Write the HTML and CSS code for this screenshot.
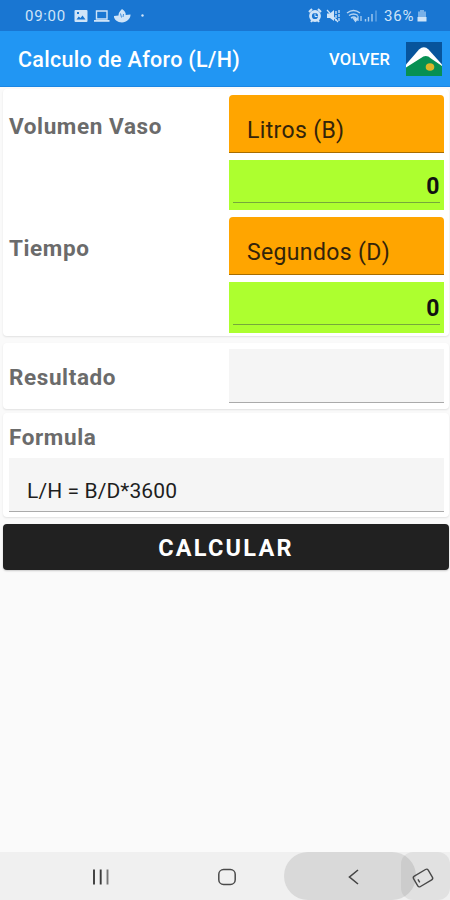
FILE: index.html
```html
<!DOCTYPE html>
<html lang="es">
<head>
    <meta charset="UTF-8">
    <meta name="viewport" content="width=device-width, initial-scale=1.0">
    <title>Calculo de Aforo (L/H)</title>
    <link rel="stylesheet" href="styles.css">
</head>
<body>
    <div class="status-bar">
        <span class="clock">09:00</span>
        <svg class="status-left" width="72" height="16" viewBox="0 0 72 16">
            <path fill-rule="evenodd" d="M1.500 2h11a1 1 0 0 1 1 1v10a1 1 0 0 1-1 1h-11a1 1 0 0 1-1-1V3a1 1 0 0 1 1-1zM2.500 11.500h9L8.500 7.500 6.500 10 4.700 8.500zM3 4v2h2V4z"/>
            <path d="M22.500 3h10.500v8H22.500z" fill="none" stroke="#cfe4f8" stroke-width="1.400"/>
            <path d="M20 12h15.500v1.800H20z"/>
            <path d="M48 1c3 2 4 4 3.700 6l4.800-.5c.3 4-4 8-8.500 8s-8.500-3.500-8-6.500l4.500-.5c0-2.500 1-4 3.500-6.500z"/>
            <path d="M46.500 5.500l1 4M49.500 6l-.5 3" stroke="#1976d2" stroke-width=".8"/>
            <circle cx="68.500" cy="7.500" r="1.200"/>
        </svg>
        <svg class="status-right" width="72" height="16" viewBox="0 0 72 16">
            <path d="M1 4l3-3M13 4l-3-3M3 14l1.500-2M11 14l-1.500-2" stroke="#cfe4f8" stroke-width="2"/>
            <circle cx="7" cy="8" r="4.500" fill="none" stroke="#cfe4f8" stroke-width="2.800"/>
            <path d="M7 5.500V8.500h2.500" fill="none" stroke="#cfe4f8"/>
            <path d="M19 5.500h3l4-3.500v11l-4-3h-3z"/>
            <path d="M19 2l11 12" stroke="#cfe4f8" stroke-width="1.200"/>
            <path d="M28 3v10M31 2v12" stroke="#cfe4f8" stroke-width="1.300" stroke-dasharray="3 1"/>
            <path d="M39 5c4-3 9-3 13 0M41 7.500c3-2 6-2 9 0M43 10c2-1.300 3.500-1.300 5 0" fill="none" stroke="#b5d4f2" stroke-width="1.500"/>
            <path d="M45 10l2.500 3.500 2-3zM50 13V8M53 8v5" stroke="#b5d4f2" stroke-width="1.200"/>
            <path d="M57.500 11v2.500M60.500 9v4.500M64 6v7.500" stroke="#a5cbef" stroke-width="1.400"/>
            <path d="M68 2.500v11" stroke="#6caae6" stroke-width="1.300"/>
        </svg>
        <span class="battery-text">36%</span>
        <svg class="battery" width="10" height="14" viewBox="0 0 10 14">
            <path d="M3 1h4v1.500h2V9H1V2.500h2z" fill="#78b0e8"/>
            <path d="M.5 8h9v4.500H.5z"/>
        </svg>
    </div>

    <header class="app-bar">
        <h1>Calculo de Aforo (L/H)</h1>
        <a class="volver" href="#">VOLVER</a>
        <svg class="logo" width="36" height="34" viewBox="0 0 36 34">
            <rect width="36" height="34" fill="#07549c"/>
            <path d="M0 22.500L13 7.500q5-4.500 9.500 0L36 22.500V34H0z" fill="#fff"/>
            <path d="M0 25.500L15 16q5-4 10 .5L36 24v10H0z" fill="#079052"/>
            <ellipse cx="24" cy="25" rx="4.300" ry="3.800" fill="#dcb52a"/>
        </svg>
    </header>

    <main>
        <section class="card datos">
            <label>Volumen Vaso</label>
            <div class="unidad">Litros (B)</div>
            <div class="valor"><span>0</span></div>
            <label>Tiempo</label>
            <div class="unidad">Segundos (D)</div>
            <div class="valor"><span>0</span></div>
        </section>

        <section class="card resultado">
            <label>Resultado</label>
            <div class="campo"></div>
        </section>

        <section class="card formula">
            <label>Formula</label>
            <div class="campo">L/H = B/D*3600</div>
        </section>

        <button class="calcular">CALCULAR</button>
    </main>

    <nav class="nav-bar">
        <div class="nav-item">
            <svg width="20" height="18" viewBox="0 0 20 18">
                <path d="M3 1.500v15M9.700 1.500v15" stroke="#3c3c3c" stroke-width="1.900"/>
                <path d="M16.500 1.500v15" stroke="#777" stroke-width="1.900"/>
            </svg>
        </div>
        <div class="nav-item">
            <svg width="20" height="18" viewBox="0 0 20 18">
                <rect x="1.800" y="1.500" width="16.400" height="15" rx="4.800" fill="none" stroke="#4a4a4a" stroke-width="1.500"/>
            </svg>
        </div>
        <div class="nav-item atras">
            <svg width="20" height="18" viewBox="0 0 20 18">
                <path d="M15 2L6.500 9l8.500 7" fill="none" stroke="#444" stroke-width="1.600"/>
            </svg>
        </div>
        <div class="rotar">
            <svg width="24" height="22" viewBox="0 0 24 22">
                <g transform="rotate(-31 12 11)" fill="none" stroke="#484848" stroke-width="1.400">
                    <rect x="3.500" y="5" width="17" height="12" rx="2"/>
                    <path d="M7 9.500v3.500"/>
                </g>
            </svg>
        </div>
    </nav>
</body>
</html>
```

FILE: styles.css
```css
* {
    box-sizing: border-box;
}

body {
    margin: 0;
    height: 900px;
    display: flex;
    flex-direction: column;
    font-family: Roboto, sans-serif;
    background-color: #fafafa;
    overflow: hidden;
}

svg {
    display: block;
    flex-shrink: 0;
}

.status-bar {
    display: flex;
    align-items: center;
    height: 31px;
    padding: 1px 23px 0 25px;
    background-color: #1976d2;
    color: #cfe4f8;
    fill: #cfe4f8;
    font-size: 15px;
}

.clock {
    width: 49px;
    letter-spacing: 0.7px;
}

.status-right {
    margin-left: auto;
}

.battery-text {
    width: 33px;
    margin-left: 4px;
    letter-spacing: 0.8px;
}

.app-bar {
    display: flex;
    align-items: center;
    height: 56px;
    padding: 0 8px 0 18px;
    background-color: #2196f3;
    border-bottom: 1px solid #1b86e3;
    color: #fff;
}

.app-bar h1 {
    flex: 1;
    margin: 0;
    padding-top: 2px;
    font-size: 21.5px;
    font-weight: 500;
    letter-spacing: 0.3px;
}

.volver {
    margin-right: 16px;
    padding-top: 2px;
    color: #fff;
    font-size: 16.5px;
    font-weight: 500;
    letter-spacing: 0.2px;
    text-decoration: none;
}

main {
    flex: 1;
    padding: 2px 1px 0 3px;
}

.card {
    background-color: #fff;
    border-radius: 4px;
    padding: 6px;
    box-shadow: 0 1px 2px rgba(0, 0, 0, 0.1);
}

.card label {
    color: #6b6b6b;
    font-size: 22.5px;
    font-weight: 700;
    line-height: 28px;
    letter-spacing: 0.6px;
}

.datos {
    display: grid;
    grid-template-columns: 220px 214.5px;
    grid-template-rows: 58px 50px 58px 51px;
    row-gap: 7px;
    height: 247px;
}

.datos label {
    padding-top: 17px;
}

.unidad {
    padding: 22px 18px 0;
    border-radius: 4px 4px 0 0;
    border-bottom: 1px solid #a86d00;
    background-color: #ffa500;
    color: #33240a;
    font-size: 23px;
    line-height: 28px;
    letter-spacing: 0.35px;
}

.valor {
    grid-column: 2;
    padding: 8px 4px 0;
    background-color: #adff2f;
}

.valor span {
    display: block;
    height: 35px;
    border-bottom: 1px solid #76a83b;
    color: #111;
    font-size: 23px;
    font-weight: 700;
    line-height: 37px;
    text-align: right;
}

.campo {
    height: 54px;
    border-bottom: 1px solid #aaa;
    background-color: #f5f5f5;
    color: #1e1e1e;
}

.resultado {
    display: grid;
    grid-template-columns: 220px 214.5px;
    align-items: center;
    height: 66px;
    margin-top: 7px;
}

.resultado label {
    padding-top: 2px;
}

.formula {
    height: 104px;
    margin-top: 4px;
    padding-top: 9px;
}

.formula label {
    display: block;
    height: 36px;
    line-height: 30px;
}

.formula .campo {
    width: 434.5px;
    padding: 20px 18px 0;
    font-size: 21px;
    line-height: 26px;
    letter-spacing: 0.1px;
}

.calcular {
    display: block;
    width: 446px;
    height: 46px;
    margin-top: 7px;
    padding: 2px 0 0;
    border: none;
    border-radius: 4px;
    background-color: #212121;
    color: #fff;
    font-family: inherit;
    font-size: 23.5px;
    font-weight: 700;
    letter-spacing: 2.2px;
    box-shadow: 0 1px 2px rgba(0, 0, 0, 0.2);
}

.nav-bar {
    position: relative;
    display: flex;
    align-items: center;
    height: 48px;
    padding: 2px 0 0 38px;
    background-color: #f0f0f0;
}

.nav-item {
    position: relative;
    display: flex;
    justify-content: center;
    width: 126px;
}

/* zona pulsada detras del boton atras */
.atras::before {
    content: "";
    position: absolute;
    top: -16px;
    left: -6px;
    width: 132px;
    height: 48px;
    border-radius: 24px;
    background-color: #d9d9d9;
}

.atras svg {
    position: relative;
}

.rotar {
    position: absolute;
    top: 0;
    right: 0;
    display: flex;
    align-items: center;
    width: 49px;
    height: 48px;
    padding: 3px 0 0 10px;
    border-radius: 12px;
    background-color: rgba(0, 0, 0, 0.06);
}
```
